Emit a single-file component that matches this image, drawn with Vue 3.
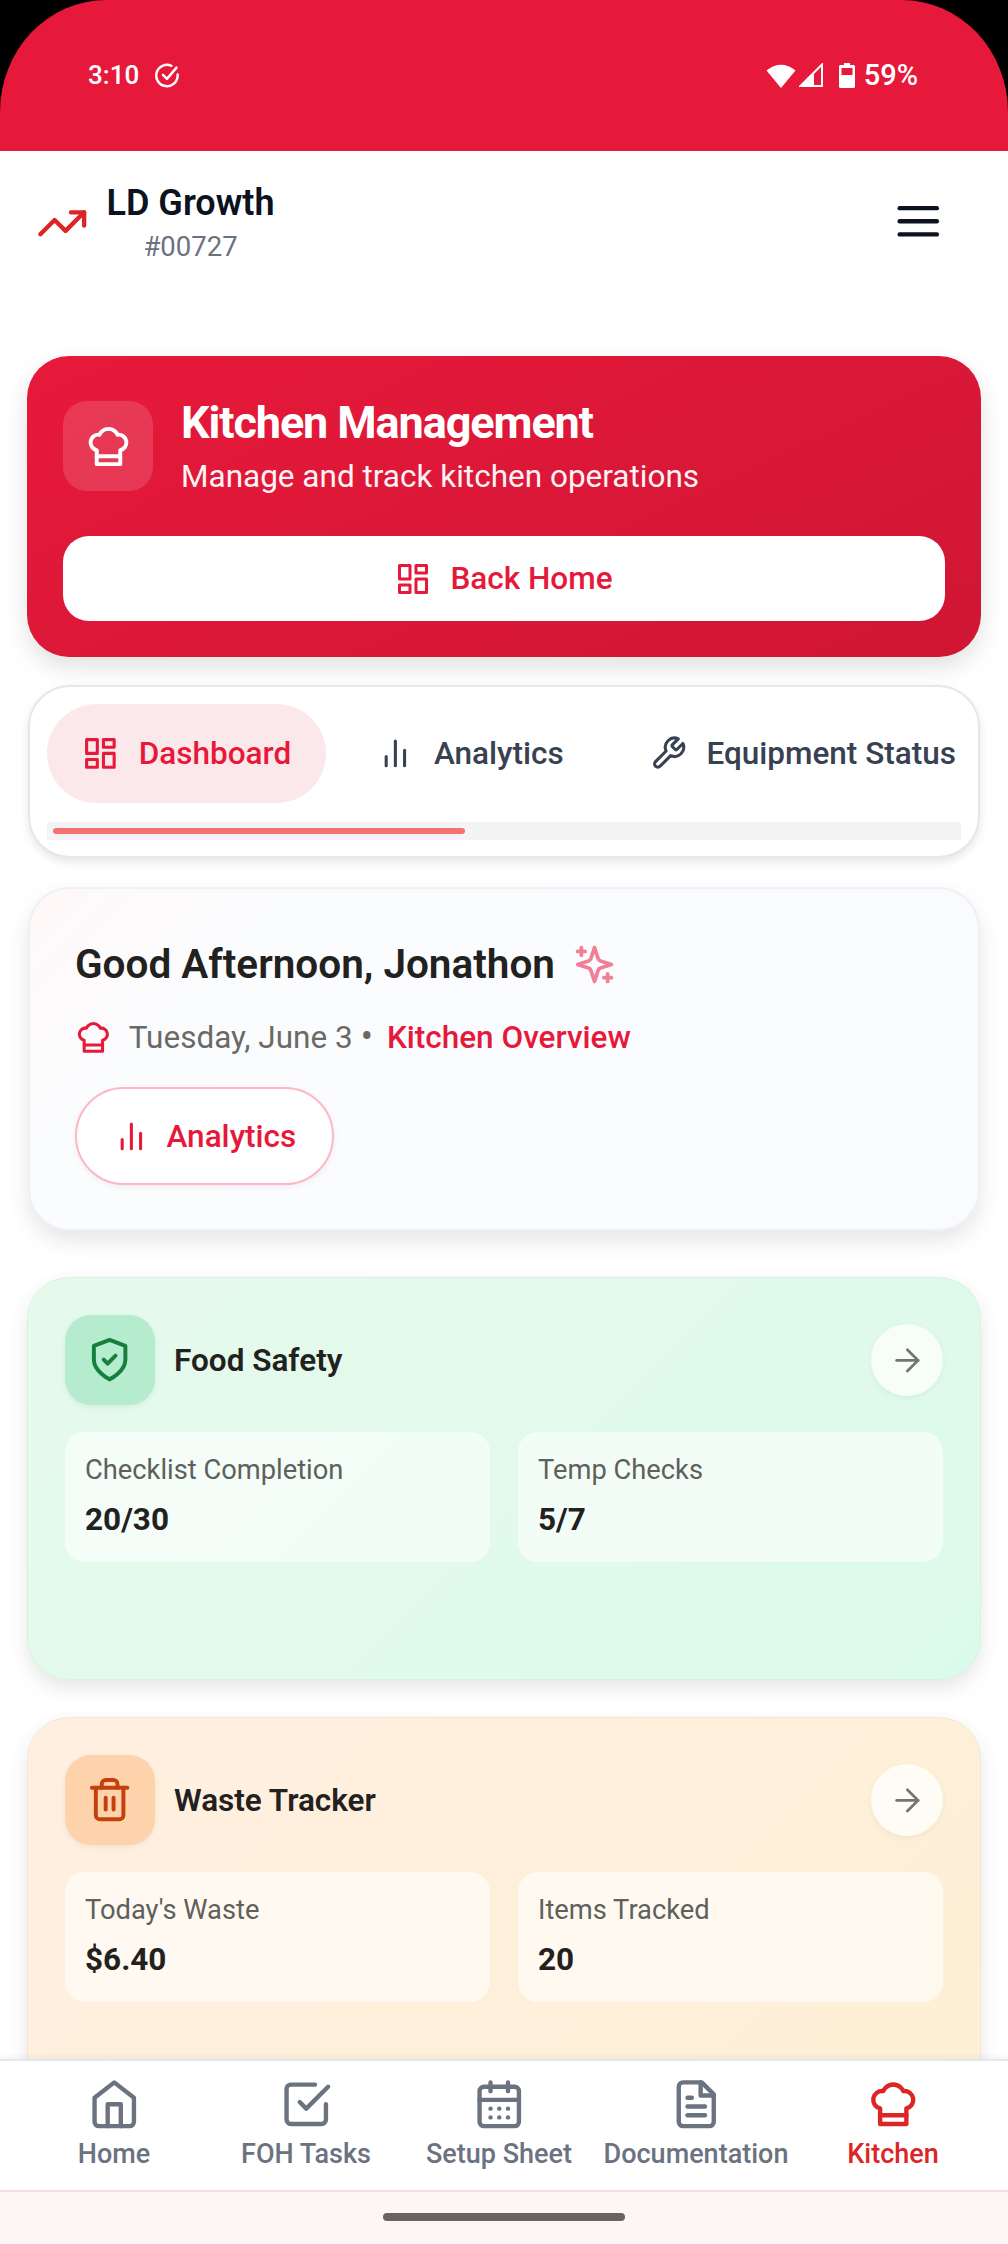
<script setup>
const chefPaths = ['M6 13.87A4 4 0 0 1 7.41 6a5.11 5.11 0 0 1 1.05-1.54 5 5 0 0 1 7.08 0A5.11 5.11 0 0 1 16.59 6 4 4 0 0 1 18 13.87V21H6Z', 'M6 17h12']
const dashPaths = ['M3 3h7v9H3z', 'M14 3h7v5h-7z', 'M14 12h7v9h-7z', 'M3 16h7v5H3z']
const barPaths = ['M18 20V10', 'M12 20V4', 'M6 20v-6']
const wrenchPaths = ['M14.7 6.3a1 1 0 0 0 0 1.4l1.6 1.6a1 1 0 0 0 1.4 0l3.77-3.77a6 6 0 0 1-7.94 7.94l-6.91 6.91a2.12 2.12 0 0 1-3-3l6.91-6.91a6 6 0 0 1 7.94-7.94l-3.76 3.76z']
const sparklePaths = ['m12 3-1.912 5.813a2 2 0 0 1-1.275 1.275L3 12l5.813 1.912a2 2 0 0 1 1.275 1.275L12 21l1.912-5.813a2 2 0 0 1 1.275-1.275L21 12l-5.813-1.912a2 2 0 0 1-1.275-1.275L12 3Z', 'M5 3v4', 'M19 17v4', 'M3 5h4', 'M17 19h4']
const arrowPaths = ['M5 12h14', 'm12 5 7 7-7 7']

const tabs = [
  { label: 'Dashboard', icon: dashPaths, active: true },
  { label: 'Analytics', icon: barPaths },
  { label: 'Equipment Status', icon: wrenchPaths }
]

const modules = [
  {
    title: 'Food Safety',
    tone: 'green',
    icon: ['M12 22s8-4 8-10V5l-8-3-8 3v7c0 6 8 10 8 10', 'm9 12 2 2 4-4'],
    stats: [
      { label: 'Checklist Completion', value: '20/30' },
      { label: 'Temp Checks', value: '5/7' }
    ]
  },
  {
    title: 'Waste Tracker',
    tone: 'orange',
    icon: ['M3 6h18', 'M19 6v14c0 1-1 2-2 2H7c-1 0-2-1-2-2V6', 'M8 6V4c0-1 1-2 2-2h4c1 0 2 1 2 2v2', 'M10 11v6', 'M14 11v6'],
    stats: [
      { label: "Today's Waste", value: '$6.40' },
      { label: 'Items Tracked', value: '20' }
    ]
  }
]

const navItems = [
  { label: 'Home', icon: ['m3 9 9-7 9 7v11a2 2 0 0 1-2 2H5a2 2 0 0 1-2-2z', 'M9 22V12h6v10'] },
  { label: 'FOH Tasks', icon: ['m9 11 3 3L22 4', 'M21 12v7a2 2 0 0 1-2 2H5a2 2 0 0 1-2-2V5a2 2 0 0 1 2-2h11'] },
  { label: 'Setup Sheet', icon: ['M5 4h14a2 2 0 0 1 2 2v14a2 2 0 0 1-2 2H5a2 2 0 0 1-2-2V6a2 2 0 0 1 2-2z', 'M16 2v4', 'M8 2v4', 'M3 10h18', 'M8 14h.01', 'M12 14h.01', 'M16 14h.01', 'M8 18h.01', 'M12 18h.01', 'M16 18h.01'] },
  { label: 'Documentation', icon: ['M14.5 2H6a2 2 0 0 0-2 2v16a2 2 0 0 0 2 2h12a2 2 0 0 0 2-2V7.5L14.5 2z', 'M14 2v6h6', 'M16 13H8', 'M16 17H8', 'M10 9H8'] },
  { label: 'Kitchen', icon: chefPaths, active: true }
]
</script>

<template>
  <div class="page">
    <div class="status-wrap">
      <div class="status">
        <div class="status-side">
          <span>3:10</span>
          <svg class="status-check" viewBox="0 0 24 24" fill="none" stroke="#fff" stroke-width="2.2" stroke-linecap="round" stroke-linejoin="round">
            <path d="M21 11v1a9.5 9.5 0 1 1-5.5-8.6" />
            <path d="m8 11.5 3.5 3.5L20 5" />
          </svg>
        </div>
        <div class="status-side status-right">
          <svg width="30" height="25" viewBox="0 0 30 25"><path d="M15 25 .5 7.5Q15-4 29.5 7.5Z" fill="#fff" /></svg>
          <svg width="24" height="24" viewBox="0 0 24 24">
            <path d="M23 1.5V23H1.5Z" fill="none" stroke="#fff" stroke-width="2" />
            <path d="M15 9v14H1.5Z" fill="#fff" />
          </svg>
          <svg class="status-batt" width="16" height="25" viewBox="0 0 16 25">
            <path d="M5 0h6v2h3.5A1.5 1.5 0 0 1 16 3.5v20a1.5 1.5 0 0 1-1.5 1.5h-13A1.5 1.5 0 0 1 0 23.500v-20A1.500 1.500 0 0 1 1.500 2H5Z" fill="#fff" />
            <path d="M2.500 5h11v7h-11z" fill="#e7193a" />
          </svg>
          <span class="status-pct">59%</span>
        </div>
      </div>
    </div>

    <div class="content">
      <header class="topbar">
        <div class="brand">
          <svg class="brand-icon" viewBox="0 0 24 24" fill="none" stroke="#dc2626" stroke-width="2" stroke-linecap="round" stroke-linejoin="round">
            <path d="M22 7l-8.500 8.500-5-5L2 17" />
            <path d="M16 7h6v6" />
          </svg>
          <div class="brand-text">
            <div class="brand-name">LD Growth</div>
            <div class="brand-id">#00727</div>
          </div>
        </div>
        <svg class="menu-icon" viewBox="0 0 24 24" fill="none" stroke="#0b1220" stroke-width="2" stroke-linecap="round">
          <path d="M3.500 6h17" /><path d="M3.500 12h17" /><path d="M3.500 18h17" />
        </svg>
      </header>

      <section class="hero">
        <div class="hero-head">
          <div class="hero-icon">
            <svg width="47" height="47" viewBox="0 0 24 24" fill="none" stroke="#fff" stroke-width="2" stroke-linecap="round" stroke-linejoin="round">
              <path v-for="d in chefPaths" :key="d" :d="d" />
            </svg>
          </div>
          <div>
            <h1 class="hero-title">Kitchen Management</h1>
            <p class="hero-sub">Manage and track kitchen operations</p>
          </div>
        </div>
        <button class="hero-btn">
          <svg width="36" height="36" viewBox="0 0 24 24" fill="none" stroke="currentColor" stroke-width="2" stroke-linejoin="round">
            <path v-for="d in dashPaths" :key="d" :d="d" />
          </svg>
          Back Home
        </button>
      </section>

      <section class="tabs-card">
        <div class="tabs">
          <div v-for="tab in tabs" :key="tab.label" class="tab" :class="{ 'tab-active': tab.active }">
            <svg width="36.750" height="36.750" viewBox="0 0 24 24" fill="none" stroke="currentColor" stroke-width="2" stroke-linecap="round" stroke-linejoin="round">
              <path v-for="d in tab.icon" :key="d" :d="d" />
            </svg>
            <span>{{ tab.label }}</span>
          </div>
        </div>
        <div class="track"><div class="thumb"></div></div>
      </section>

      <section class="greeting">
        <div class="greeting-title">
          <h2>Good Afternoon, Jonathon</h2>
          <svg width="45" height="45" viewBox="0 0 24 24" fill="none" stroke="#f17f95" stroke-width="2" stroke-linecap="round" stroke-linejoin="round">
            <path v-for="d in sparklePaths" :key="d" :d="d" />
          </svg>
        </div>
        <div class="greeting-row">
          <svg width="36.750" height="36.750" viewBox="0 0 24 24" fill="none" stroke="#e7193a" stroke-width="2" stroke-linecap="round" stroke-linejoin="round">
            <path v-for="d in chefPaths" :key="d" :d="d" />
          </svg>
          <span class="greeting-date">Tuesday, June 3</span>
          <span class="greeting-dot">•</span>
          <span class="greeting-link">Kitchen Overview</span>
        </div>
        <button class="pill-btn">
          <svg width="36.750" height="36.750" viewBox="0 0 24 24" fill="none" stroke="currentColor" stroke-width="2" stroke-linecap="round">
            <path v-for="d in barPaths" :key="d" :d="d" />
          </svg>
          Analytics
        </button>
      </section>

      <section v-for="mod in modules" :key="mod.title" class="module" :class="'module-' + mod.tone">
        <div class="module-head">
          <div class="module-icon">
            <svg width="47.250" height="47.250" viewBox="0 0 24 24" fill="none" stroke="currentColor" stroke-width="2" stroke-linecap="round" stroke-linejoin="round">
              <path v-for="d in mod.icon" :key="d" :d="d" />
            </svg>
          </div>
          <h3>{{ mod.title }}</h3>
          <div class="module-go">
            <svg width="36.750" height="36.750" viewBox="0 0 24 24" fill="none" stroke="#75756f" stroke-width="1.800" stroke-linecap="round" stroke-linejoin="round">
              <path v-for="d in arrowPaths" :key="d" :d="d" />
            </svg>
          </div>
        </div>
        <div class="stats">
          <div v-for="stat in mod.stats" :key="stat.label" class="stat">
            <div class="stat-label">{{ stat.label }}</div>
            <div class="stat-value">{{ stat.value }}</div>
          </div>
        </div>
      </section>
    </div>

    <nav class="bottom-nav">
      <div v-for="item in navItems" :key="item.label" class="nav-item" :class="{ 'nav-active': item.active }">
        <svg width="52.500" height="52.500" viewBox="0 0 24 24" fill="none" stroke="currentColor" stroke-width="2" stroke-linecap="round" stroke-linejoin="round">
          <path v-for="d in item.icon" :key="d" :d="d" />
        </svg>
        <span>{{ item.label }}</span>
      </div>
    </nav>
    <div class="gesture"><div class="gesture-bar"></div></div>
  </div>
</template>

<style scoped>
.page {
  height: 2244px;
  display: flex;
  flex-direction: column;
  overflow: hidden;
  background: #fff;
  font-family: Roboto, "Liberation Sans", sans-serif;
  color: #1c1917;
}
h1, h2, h3, p { margin: 0; }

.status-wrap { background: #000; }
.status {
  height: 151px;
  box-sizing: border-box;
  padding: 60px 90px 0 88px;
  display: flex;
  justify-content: space-between;
  align-items: flex-start;
  background: #e7193a;
  border-radius: 106px 106px 0 0 / 112px 112px 0 0;
  color: #fff;
  font-size: 26px;
  font-weight: 500;
  line-height: 30px;
}
.status-side { display: flex; align-items: center; gap: 15px; }
.status-check { width: 27px; height: 27px; }
.status-right { gap: 3px; }
.status-batt { margin-left: 13px; }
.status-pct { margin-left: 6px; font-size: 29px; }

.content { flex: 1; min-height: 0; overflow: hidden; }

.topbar {
  height: 205px;
  box-sizing: border-box;
  padding: 24px 64px 0 36px;
  display: flex;
  justify-content: space-between;
  align-items: flex-start;
}
.brand { display: flex; align-items: center; gap: 18px; height: 92px; }
.brand-icon { width: 52.5px; height: 52.5px; margin-top: 5px; }
.brand-text { text-align: center; }
.brand-name { font-size: 36px; font-weight: 600; line-height: 52px; padding-top: 3px; color: #0b1220; }
.brand-id { font-size: 27.5px; line-height: 42px; margin-top: -3px; color: #6b7280; }
.menu-icon { width: 52.5px; height: 52.5px; margin-top: 20px; }

.hero {
  margin: 0 27px 28px;
  padding: 45px 36px 36px;
  border-radius: 42px;
  background: linear-gradient(155deg, #e8193b, #cf1633);
  box-shadow: 0 10px 24px rgba(0, 0, 0, 0.12);
  color: #fff;
}
.hero-head { display: flex; align-items: flex-start; gap: 28px; height: 135px; }
.hero-icon {
  width: 90px;
  height: 90px;
  border-radius: 24px;
  display: flex;
  align-items: center;
  justify-content: center;
  background: rgba(255, 255, 255, 0.14);
}
.hero-title { font-size: 45px; font-weight: 700; line-height: 44px; letter-spacing: -1.1px; }
.hero-sub { font-size: 31.5px; line-height: 44px; margin-top: 10px; opacity: 0.95; }
.hero-btn {
  width: 100%;
  height: 85px;
  border: 0;
  border-radius: 26px;
  background: #fff;
  color: #e7193a;
  font: 500 31.5px Roboto, sans-serif;
  display: flex;
  align-items: center;
  justify-content: center;
  gap: 19px;
}

.tabs-card {
  margin: 0 28px 29px;
  height: 173px;
  box-sizing: border-box;
  padding: 17px 17px 0;
  border: 2px solid #e5e7eb;
  border-radius: 42px;
  background: #fff;
  box-shadow: 0 4px 10px rgba(0, 0, 0, 0.1);
}
.tabs { display: flex; gap: 16px; overflow: hidden; height: 99px; }
.tab {
  flex: none;
  padding: 0 35px;
  display: flex;
  align-items: center;
  gap: 20px;
  border-radius: 50px;
  color: #374151;
  font-size: 31.5px;
  font-weight: 500;
}
.tab-active { background: #fbe8eb; color: #e7193a; }
.track { margin-top: 19px; height: 18px; width: 914px; background: #f3f4f6; padding: 6px; box-sizing: border-box; }
.thumb { width: 412px; height: 6px; border-radius: 3px; background: #f87171; }

.greeting {
  margin: 0 28px 46px;
  height: 344px;
  box-sizing: border-box;
  padding: 49px 45px 0;
  border: 2px solid #eff0f4;
  border-radius: 42px;
  background: linear-gradient(135deg, #fff8f8 0%, #fbfcfe 20%, #fafbff 100%);
  box-shadow: 0 10px 22px rgba(0, 0, 0, 0.1);
}
.greeting-title { display: flex; align-items: center; gap: 17px; height: 52px; }
.greeting-title h2 { font-size: 40.5px; font-weight: 600; color: #22211e; }
.greeting-row {
  display: flex;
  align-items: center;
  margin-top: 27px;
  height: 40px;
  font-size: 31.5px;
}
.greeting-date { margin-left: 17px; color: #6b6966; }
.greeting-dot { margin: 0 14px 0 8px; font-size: 36px; line-height: 40px; color: #6b6966; }
.greeting-link { color: #e7193a; font-weight: 500; }
.pill-btn {
  margin-top: 30px;
  width: 259px;
  height: 98px;
  border: 2px solid #fdb8c2;
  border-radius: 50px;
  background: #fff;
  color: #e7193a;
  font: 500 31.5px Roboto, sans-serif;
  display: flex;
  align-items: center;
  justify-content: center;
  gap: 17px;
  box-shadow: 0 2px 6px rgba(0, 0, 0, 0.06);
}

.module {
  margin: 0 27px 37px;
  height: 403px;
  box-sizing: border-box;
  padding: 37px;
  border: 1px solid rgba(0, 0, 0, 0.04);
  border-radius: 42px;
  box-shadow: 0 8px 20px rgba(0, 0, 0, 0.1);
}
.module-green { background: linear-gradient(135deg, #e6faec, #dcfaea); }
.module-orange { background: linear-gradient(135deg, #ffefe1, #fdf0d5); }
.module-head { display: flex; align-items: center; gap: 19px; height: 90px; }
.module-head h3 { flex: 1; font-size: 31.5px; font-weight: 600; color: #22211e; }
.module-icon {
  width: 90px;
  height: 90px;
  border-radius: 26px;
  display: flex;
  align-items: center;
  justify-content: center;
  box-shadow: 0 2px 6px rgba(0, 0, 0, 0.06);
}
.module-green .module-icon { background: #b5ecce; color: #15803d; }
.module-orange .module-icon { background: #fed3ac; color: #c2410c; }
.module-go {
  width: 72px;
  height: 72px;
  border-radius: 50%;
  display: flex;
  align-items: center;
  justify-content: center;
  background: rgba(255, 255, 255, 0.75);
  box-shadow: 0 2px 6px rgba(0, 0, 0, 0.05);
}
.stats { display: grid; grid-template-columns: 425px 425px; gap: 28px; margin-top: 27px; }
.stat {
  height: 130px;
  box-sizing: border-box;
  padding: 20px 20px 0;
  border-radius: 20px;
  background: rgba(255, 255, 255, 0.6);
}
.stat-label { font-size: 27.3px; line-height: 36px; color: #5e605b; }
.stat-value { margin-top: 12px; font-size: 31.5px; line-height: 40px; font-weight: 700; color: #22211e; }

.bottom-nav {
  position: relative;
  height: 133px;
  box-sizing: border-box;
  padding: 17px 18px 0;
  display: grid;
  grid-template-columns: 192px 192px 194px 200px 194px;
  border-top: 2px solid #e2e8f0;
  border-bottom: 2px solid #f3e0dc;
  background: #fff;
  box-shadow: 0 -2px 6px rgba(0, 0, 0, 0.05);
}
.nav-item {
  display: flex;
  flex-direction: column;
  align-items: center;
  color: #6b7280;
  font-size: 27px;
  font-weight: 500;
  line-height: 36px;
  white-space: nowrap;
}
.nav-item span { margin-top: 5px; }
.nav-active { color: #dc2626; }

.gesture {
  height: 52px;
  background: #fef6f4;
  display: flex;
  justify-content: center;
  padding-top: 21px;
  box-sizing: border-box;
}
.gesture-bar { width: 242px; height: 8px; border-radius: 4px; background: #686462; }
</style>

<style>
html, body { margin: 0; background: #fff; }
</style>
